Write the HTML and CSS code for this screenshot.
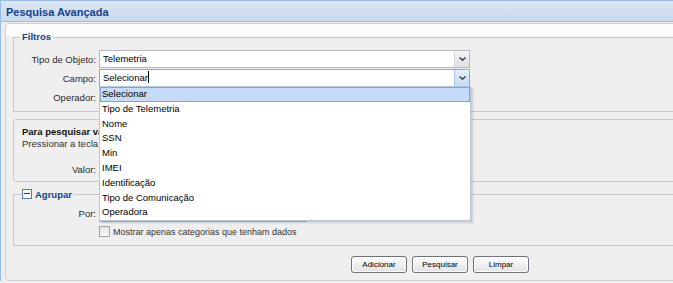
FILE: index.html
```html
<!DOCTYPE html>
<html lang="pt-BR">
<head>
  <meta charset="UTF-8">
  <meta name="viewport" content="width=device-width, initial-scale=1.0">
  <title>Pesquisa Avançada</title>
  <link rel="stylesheet" href="styles.css">
</head>
<body>
  <div class="panel">
    <div class="panel-header">Pesquisa Avançada</div>
    <div class="panel-body">
      <form class="form-box" id="searchForm">

        <!-- Filtros -->
        <fieldset class="group filtros">
          <legend>Filtros</legend>
          <div class="row">
            <label>Tipo de Objeto:</label>
            <div class="combo">
              <span class="combo-text">Telemetria</span>
              <span class="trigger"><svg width="9" height="6" viewBox="0 0 9 6"><path d="M1.5 1.5 L4.5 4.2 L7.5 1.5" fill="none" stroke="#3d4a5e" stroke-width="1.6"/></svg></span>
            </div>
          </div>
          <div class="row">
            <label>Campo:</label>
            <div class="combo focus">
              <span class="combo-text">Selecionar<span class="caret"></span></span>
              <span class="trigger"><svg width="9" height="6" viewBox="0 0 9 6"><path d="M1.5 1.5 L4.5 4.2 L7.5 1.5" fill="none" stroke="#3d4a5e" stroke-width="1.6"/></svg></span>

              <!-- lista aberta do combo -->
              <ul class="combo-list">
                <li class="selected">Selecionar</li>
                <li>Tipo de Telemetria</li>
                <li>Nome</li>
                <li>SSN</li>
                <li>Min</li>
                <li>IMEI</li>
                <li>Identificação</li>
                <li>Tipo de Comunicação</li>
                <li>Operadora</li>
              </ul>
            </div>
          </div>
          <div class="row">
            <label>Operador:</label>
            <div class="combo">
              <span class="combo-text"></span>
              <span class="trigger"></span>
            </div>
          </div>
        </fieldset>

        <!-- Dica de pesquisa (coberta em parte pela lista aberta) -->
        <div class="group tip">
          <div class="tip-title">Para pesquisar vários valores</div>
          <div class="tip-text">Pressionar a tecla Enter após cada valor</div>
          <div class="row valor">
            <label>Valor:</label>
            <div class="combo"><span class="combo-text"></span></div>
          </div>
        </div>

        <!-- Agrupar -->
        <fieldset class="group agrupar">
          <legend><span class="collapse-icon"></span>Agrupar</legend>
          <div class="row por">
            <label>Por:</label>
            <div class="combo short">
              <span class="combo-text"></span>
              <span class="trigger"></span>
            </div>
          </div>
          <div class="check-row">
            <span class="checkbox"></span>
            <span>Mostrar apenas categorias que tenham dados</span>
          </div>
        </fieldset>

        <div class="buttons">
          <button type="button">Adicionar</button>
          <button type="button">Pesquisar</button>
          <button type="button">Limpar</button>
        </div>
      </form>
    </div>
  </div>
</body>
</html>
```

FILE: styles.css
```css
html, body { margin: 0; overflow: hidden; }
body {
  font-family: "Liberation Sans", Arial, sans-serif;
  font-size: 9.5px;
  color: #222;
  background: #efefef;
}

.panel { width: 890px; border-left: 1px solid #99bbe8; }
.panel-header {
  height: 17px;
  padding: 3px 0 0 5px;
  border-top: 1px solid #99bbe8;
  border-bottom: 1px solid #99bbe8;
  background: linear-gradient(#dae5f4, #c9daee);
  color: #15428b;
  font-weight: bold;
  font-size: 11px;
  line-height: 17px;
}
.panel-body { padding: 1px 0 0 4px; }

.form-box {
  width: 854px;
  margin: 0;
  padding: 8px 7px 7px;
  border: 1px solid #d0d0d0;
  border-radius: 4px;
  background: linear-gradient(#fcfcfc 0, #fcfcfc 12px, #efefef 13px);
}

/* grupos */
.group { margin: 0; border: 1px solid #c6c8ce; min-width: 0; }
fieldset.group { padding: 8px 0 4px; }
legend {
  margin-left: 6px;
  padding: 0 2px;
  line-height: 10px;
  font-weight: bold;
  color: #15428b;
}

.row { display: flex; align-items: center; height: 18px; margin-bottom: 1px; }
.row label { width: 82px; padding-right: 3px; text-align: right; color: #2a2a2a; }

.combo {
  position: relative;
  display: flex;
  width: 371px;
  height: 18px;
  box-sizing: border-box;
  border: 1px solid #b5b8c8;
  background: #fff;
}
.combo.short { width: 208px; }
.combo-text { flex: 1; padding-left: 3px; line-height: 16px; color: #000; }
.caret {
  display: inline-block;
  width: 0;
  height: 12px;
  border-left: 1px solid #000;
  vertical-align: -2px;
}
.trigger {
  display: flex;
  align-items: center;
  justify-content: center;
  width: 14px;
  border-left: 1px solid #d4d6dc;
  background: linear-gradient(#f6f6f6, #dedfe2);
}
.combo.focus { border-color: #7eadd9; }
.combo.focus .trigger { border-left-color: #a9c6e8; background: linear-gradient(#e6f0fb, #c6dbf3); }

.combo-list {
  position: absolute;
  left: -1px;
  top: 16px;
  z-index: 10;
  width: 372px;
  box-sizing: border-box;
  margin: 0;
  padding: 0;
  list-style: none;
  border: 1px solid #b7c7dc;
  background: #fff;
  box-shadow: 2px 2px 2px rgba(0, 0, 0, 0.15);
}
.combo-list li {
  height: 12.8px;
  line-height: 12.8px;
  padding: 0 1px;
  border: 1px solid transparent;
  color: #000;
}
.combo-list li.selected { background: #c5dbf7; border-color: #7fa5d5; }

/* caixa de dica */
.tip { margin-top: 7px; padding: 6px 0 3px; border-radius: 3px; }
.tip-title, .tip-text { padding-left: 8px; line-height: 12px; white-space: nowrap; }
.tip-title { font-weight: bold; color: #111; }
.tip-text { color: #333; }
.row.valor { margin: 10px 0 0; }

/* agrupar */
fieldset.agrupar { margin-top: 7px; padding: 4px 0 7px; }
.agrupar legend { line-height: 11px; margin-left: 7px; padding: 0 2px 0 1px; }
.collapse-icon {
  display: inline-block;
  position: relative;
  width: 8px;
  height: 8px;
  margin-right: 3px;
  border: 1px solid #5877a6;
  background: #fff;
  vertical-align: -1px;
}
.collapse-icon::after {
  content: "";
  position: absolute;
  left: 1px;
  top: 3px;
  width: 6px;
  height: 1px;
  background: #15428b;
}
.row.por { margin-bottom: 3px; }
.check-row { display: flex; align-items: center; height: 13px; padding-left: 85px; color: #333; }
.check-row span:last-child { font-size: 9px; }
.checkbox {
  width: 11px;
  height: 11px;
  box-sizing: border-box;
  margin-right: 3px;
  border: 1px solid #a4a4a4;
  background: linear-gradient(#e4e4e4, #f8f8f8);
}

/* botoes */
.buttons { display: flex; justify-content: center; gap: 5px; margin-top: 10px; }
.buttons button {
  width: 56px;
  height: 17px;
  padding: 0;
  border: 1px solid #6f737a;
  border-radius: 3px;
  background: linear-gradient(#fdfdfd, #e2e3e6);
  box-shadow: inset 0 0 0 1px #fff;
  font-family: "Liberation Sans", Arial, sans-serif;
  font-size: 8px;
  color: #000;
}
```
